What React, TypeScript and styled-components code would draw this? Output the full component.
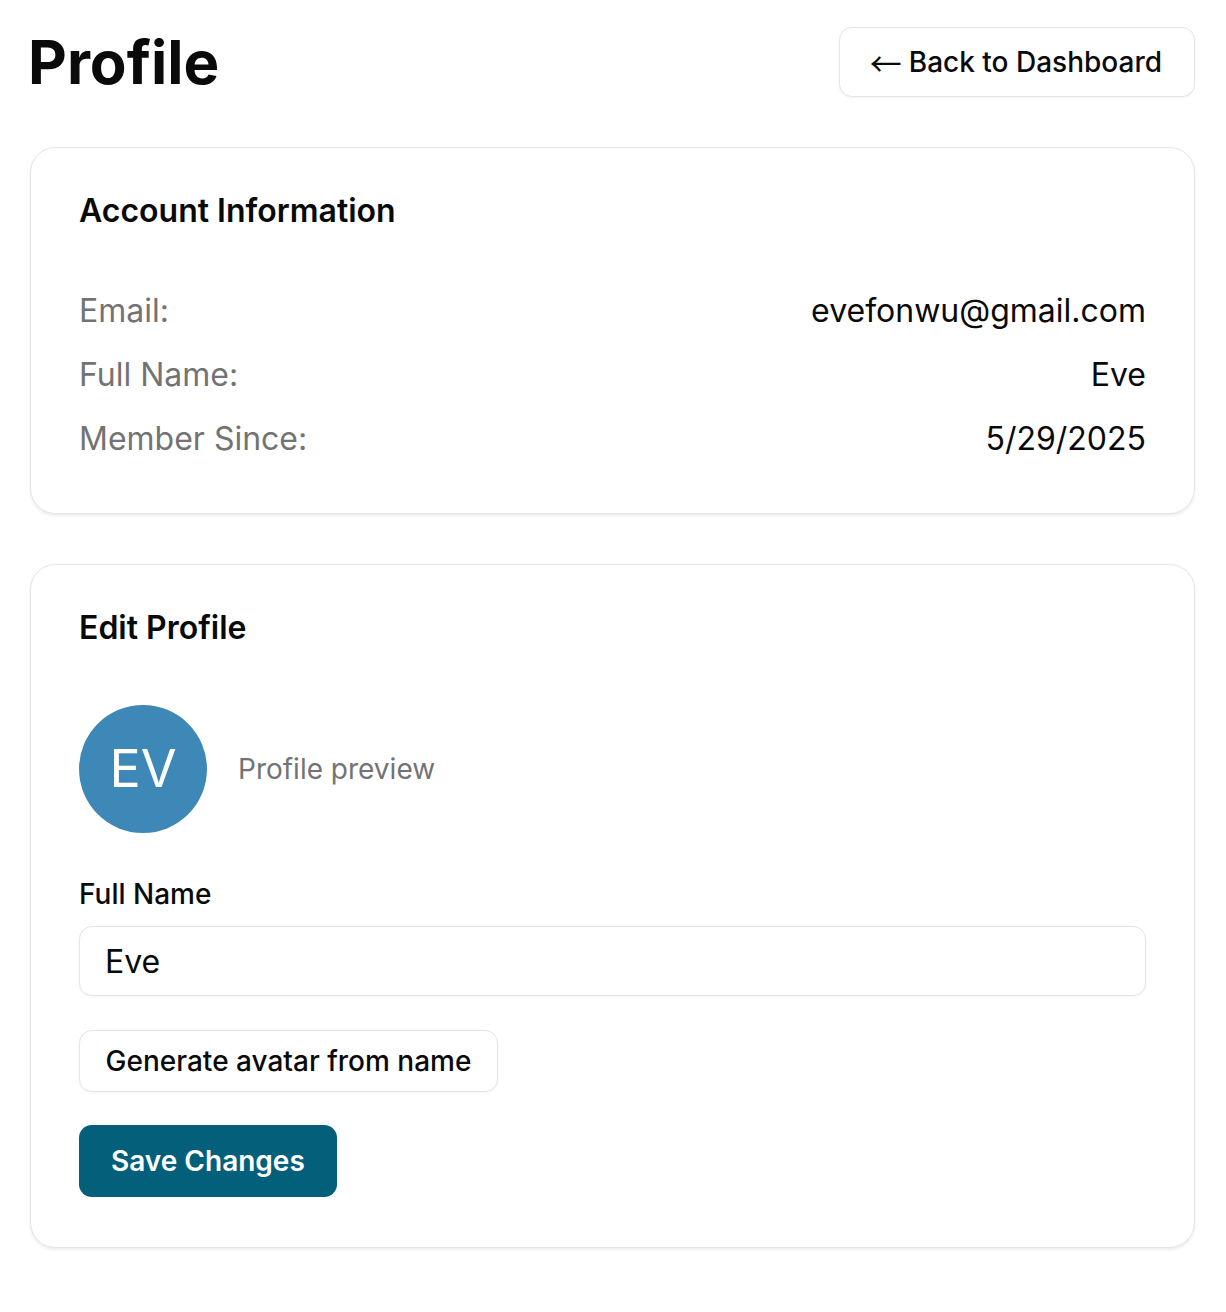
import React from 'react';
import styled, { createGlobalStyle } from 'styled-components';

const GlobalStyle = createGlobalStyle`
  body {
    margin: 0;
    background: #ffffff;
    font-family: Inter, 'Noto Sans', 'Liberation Sans', sans-serif;
    color: #0a0a0a;
  }
  * {
    box-sizing: border-box;
  }
`;

const Page = styled.div`
  padding: 27px 31px 40px 30px;
  display: flex;
  flex-direction: column;
  gap: 50px;
`;

const Header = styled.div`
  display: flex;
  align-items: center;
  justify-content: space-between;
  height: 70px;
`;

const Title = styled.h1`
  margin: 0 0 0 -2px;
  font-size: 60px;
  font-weight: 700;
  line-height: 70px;
`;

const OutlineButton = styled.button<{ $height: number; $pad: string }>`
  height: ${p => p.$height}px;
  padding: ${p => p.$pad};
  background: #ffffff;
  border: 1.6px solid #e5e5e5;
  border-radius: 12.8px;
  box-shadow: 0 1px 2px rgba(0, 0, 0, 0.05);
  font-family: inherit;
  font-size: 28px;
  font-weight: 500;
  color: #0a0a0a;
  cursor: pointer;
  display: inline-flex;
  align-items: center;
`;

const Arrow = styled.span`
  font-family: 'Noto Sans CJK JP', 'DejaVu Sans', sans-serif;
  font-size: 32px;
  font-weight: 400;
  line-height: 1;
  margin-right: 7px;
`;

const Card = styled.section`
  background: #ffffff;
  border: 1.6px solid #e5e5e5;
  border-radius: 25.6px;
  box-shadow: 0 1.6px 3.2px rgba(0, 0, 0, 0.08);
  padding: 44px 48px 50px;
`;

const CardTitle = styled.h2`
  margin: 0 0 57px;
  font-size: 32px;
  font-weight: 600;
  line-height: 1.2;
`;

const InfoList = styled.div`
  display: flex;
  flex-direction: column;
  gap: 16px;
`;

const InfoRow = styled.div`
  display: flex;
  justify-content: space-between;
  font-size: 32px;
  line-height: 48px;
`;

const InfoLabel = styled.span`
  color: #737373;
`;

const InfoValue = styled.span`
  color: #0a0a0a;
`;

const AvatarRow = styled.div`
  display: flex;
  align-items: center;
  gap: 31px;
  margin-bottom: 42px;
`;

const Avatar = styled.div`
  width: 128px;
  height: 128px;
  border-radius: 50%;
  background: #3e88b8;
  color: #ffffff;
  display: flex;
  align-items: center;
  justify-content: center;
  font-size: 52px;
  font-weight: 400;
`;

const Muted = styled.span`
  font-size: 28px;
  color: #737373;
`;

const Label = styled.label`
  display: block;
  font-size: 28px;
  font-weight: 500;
  line-height: 38.4px;
  margin-bottom: 13px;
`;

const Input = styled.input`
  display: block;
  width: 100%;
  height: 70px;
  padding: 0 25px;
  border: 1.6px solid #e5e5e5;
  border-radius: 12.8px;
  box-shadow: 0 1px 2px rgba(0, 0, 0, 0.05);
  font-family: inherit;
  font-size: 32px;
  color: #0a0a0a;
  outline: none;
  margin-bottom: 34px;
`;

const Actions = styled.div`
  display: flex;
  flex-direction: column;
  align-items: flex-start;
  gap: 33px;
`;

const PrimaryButton = styled.button`
  height: 72px;
  padding: 0 32px;
  background: #035f7a;
  color: #ffffff;
  border: none;
  border-radius: 12.8px;
  font-family: inherit;
  font-size: 28px;
  font-weight: 600;
  cursor: pointer;
`;

const info = [
  { label: 'Email:', value: 'evefonwu@gmail.com' },
  { label: 'Full Name:', value: 'Eve' },
  { label: 'Member Since:', value: '5/29/2025' },
];

export default function App() {
  return (
    <>
      <GlobalStyle />
      <Page>
        <Header>
          <Title>Profile</Title>
          <OutlineButton $height={70} $pad="0 32px 0 30px">
            <Arrow>←</Arrow>
            Back to Dashboard
          </OutlineButton>
        </Header>

        <Card>
          <CardTitle>Account Information</CardTitle>
          <InfoList>
            {info.map(row => (
              <InfoRow key={row.label}>
                <InfoLabel>{row.label}</InfoLabel>
                <InfoValue>{row.value}</InfoValue>
              </InfoRow>
            ))}
          </InfoList>
        </Card>

        <Card>
          <CardTitle>Edit Profile</CardTitle>
          <AvatarRow>
            <Avatar>EV</Avatar>
            <Muted>Profile preview</Muted>
          </AvatarRow>
          <Label htmlFor="fullName">Full Name</Label>
          <Input id="fullName" defaultValue="Eve" />
          <Actions>
            <OutlineButton $height={62} $pad="0 25.6px">
              Generate avatar from name
            </OutlineButton>
            <PrimaryButton>Save Changes</PrimaryButton>
          </Actions>
        </Card>
      </Page>
    </>
  );
}
